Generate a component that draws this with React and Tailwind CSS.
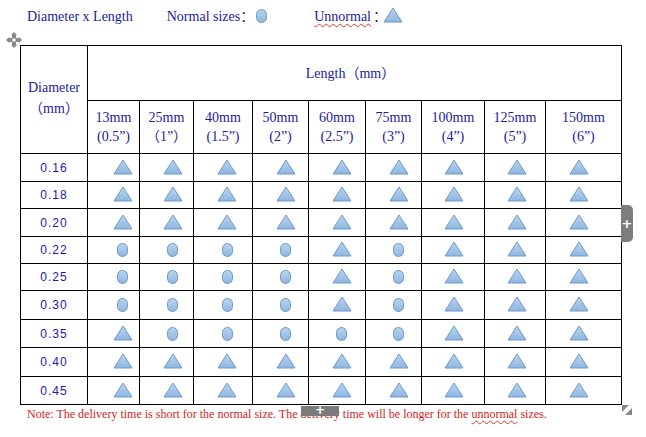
import React from "react";

const serif = "font-['Liberation_Serif','Noto_Sans_CJK_SC',serif]";

function Tri({ className = "" }) {
  return (
    <svg width="20" height="16" viewBox="0 0 20 16" className={className}>
      <defs>
        <linearGradient id="tg" x1="0" y1="0" x2="0" y2="1">
          <stop offset="0" stopColor="#b9d5ef" />
          <stop offset="1" stopColor="#8fb6e0" />
        </linearGradient>
      </defs>
      <polygon points="10,1 19,15 1,15" fill="url(#tg)" stroke="#6c98cc" strokeWidth="1" strokeLinejoin="round" />
    </svg>
  );
}

function Dot({ className = "" }) {
  return (
    <svg width="11" height="14" viewBox="0 0 11 14" className={className}>
      <defs>
        <linearGradient id="dg" x1="0" y1="0" x2="0" y2="1">
          <stop offset="0" stopColor="#b9d5ef" />
          <stop offset="1" stopColor="#8fb6e0" />
        </linearGradient>
      </defs>
      <rect x="0.5" y="0.5" width="10" height="13" rx="5" fill="url(#dg)" stroke="#6c98cc" strokeWidth="1" />
    </svg>
  );
}

const cols = [
  ["13mm", "(0.5”)"],
  ["25mm", "（1”）"],
  ["40mm", "(1.5”)"],
  ["50mm", "(2”)"],
  ["60mm", "(2.5”)"],
  ["75mm", "(3”)"],
  ["100mm", "(4”)"],
  ["125mm", "(5”)"],
  ["150mm", "(6”)"],
];

const colW = ["w-[52px]", "w-[54px]", "w-[59px]", "w-[56px]", "w-[57px]", "w-[56px]", "w-[63px]", "w-[61px]", "w-[76px]"];
const shift = ["pl-[18px]", "pl-[12px]", "pl-[8px]", "pl-[10px]", "pl-[9px]", "pl-[10px]", "pl-[1px]", "pl-[4px]", "pr-[10px]"];

const rows = [
  ["0.16", "TTTTTTTTT", "h-[28px]"],
  ["0.18", "TTTTTTTTT", "h-[27px]"],
  ["0.20", "TTTTTTTTT", "h-[28px]"],
  ["0.22", "CCCCTCTTT", "h-[27px]"],
  ["0.25", "CCCCTCTTT", "h-[27px]"],
  ["0.30", "CCCCTCTTT", "h-[29px]"],
  ["0.35", "TCCCCCTTT", "h-[28px]"],
  ["0.40", "TTTTTTTTT", "h-[29px]"],
  ["0.45", "TTTTTTTTT", "h-[28px]"],
];

function MoveIcon() {
  return (
    <svg width="16" height="16" viewBox="0 0 16 16">
      <g fill="#8a8a8a">
        <polygon points="8,0 11,3 5,3" />
        <polygon points="8,16 11,13 5,13" />
        <polygon points="0,8 3,5 3,11" />
        <polygon points="16,8 13,5 13,11" />
        <rect x="6" y="3" width="4" height="10" />
        <rect x="3" y="6" width="10" height="4" />
      </g>
      <rect x="6.5" y="6.5" width="3" height="3" fill="#ffffff" />
    </svg>
  );
}

export default function App() {
  return (
    <div className={`relative w-[646px] h-[437px] bg-white overflow-hidden ${serif}`}>
      {/* Top legend line */}
      <div className="flex items-center h-[32px] pl-[27px] text-[14px] text-[#1b1b9a]">
        <span>Diameter x Length</span>
        <span className="ml-[34px]">Normal sizes：</span>
        <Dot className="ml-[2px]" />
        <span className="ml-[47px] underline decoration-wavy decoration-[#e03030] decoration-1 underline-offset-2">Unnormal</span>
        <span className="ml-[2px]">：</span>
        <Tri className="ml-[-4px] mb-[2px]" />
      </div>

      <div className="pl-[20px] pt-[13px]">
        <table className="table-fixed border-collapse w-[601px] text-[#1b1b9a]">
          <colgroup>
            <col className="w-[67px]" />
            {colW.map((w, i) => (
              <col key={i} className={w} />
            ))}
          </colgroup>
          <thead>
            <tr className="h-[55px]">
              <th rowSpan={2} className="border border-black font-normal text-[14px] leading-[21px] align-middle">
                <div className="-mt-[4px]">Diameter</div>
                <div>（mm）</div>
              </th>
              <th colSpan={9} className="border border-black font-normal text-[14px] pr-[8px]">
                Length（mm）
              </th>
            </tr>
            <tr className="h-[53px]">
              {cols.map(([a, b], i) => (
                <th key={i} className="border border-black font-normal text-[14px] leading-[19px] align-middle">
                  <div>{a}</div>
                  <div>{b}</div>
                </th>
              ))}
            </tr>
          </thead>
          <tbody>
            {rows.map(([d, s, h]) => (
              <tr key={d} className={h}>
                <td className="border border-black text-center font-['Liberation_Sans',sans-serif] text-[12px] tracking-[1px] text-[#1a1ab0]">
                  {d}
                </td>
                {s.split("").map((c, i) => (
                  <td key={i} className="border border-black p-0">
                    <div className={`flex justify-center items-center ${shift[i]}`}>
                      {c === "T" ? <Tri className="-mt-[2px]" /> : <Dot />}
                    </div>
                  </td>
                ))}
              </tr>
            ))}
          </tbody>
        </table>
      </div>

      <p className="pl-[27px] pt-[1px] text-[12px] leading-[16px] text-[#d41c1c]">
        Note: The delivery time is short for the normal size. The delivery time will be longer for the{" "}
        <span className="underline decoration-wavy decoration-[#e03030] decoration-1 underline-offset-2">unnormal</span> sizes.
      </p>

      {/* Overlays: table handles */}
      <div className="absolute left-[6px] top-[32px]">
        <MoveIcon />
      </div>
      <div className="absolute left-[621px] top-[205px] w-[12px] h-[37px] bg-[#7d7d7d] rounded-r-[5px] flex items-center justify-center text-white text-[13px] font-bold font-['DejaVu_Sans',sans-serif] leading-none">
        +
      </div>
      <div className="absolute left-[301px] top-[406px] w-[38px] h-[10px] bg-[#7b7b7b] flex justify-center items-start text-white text-[12px] font-bold font-['DejaVu_Sans',sans-serif] leading-[9px]">
        +
      </div>
      <div className="absolute left-[622px] top-[405px]">
        <svg width="10" height="10" viewBox="0 0 10 10">
          <polygon points="0,0 7,0 0,7" fill="#888888" />
          <polygon points="10,3 10,10 3,10" fill="#888888" />
        </svg>
      </div>
    </div>
  );
}
